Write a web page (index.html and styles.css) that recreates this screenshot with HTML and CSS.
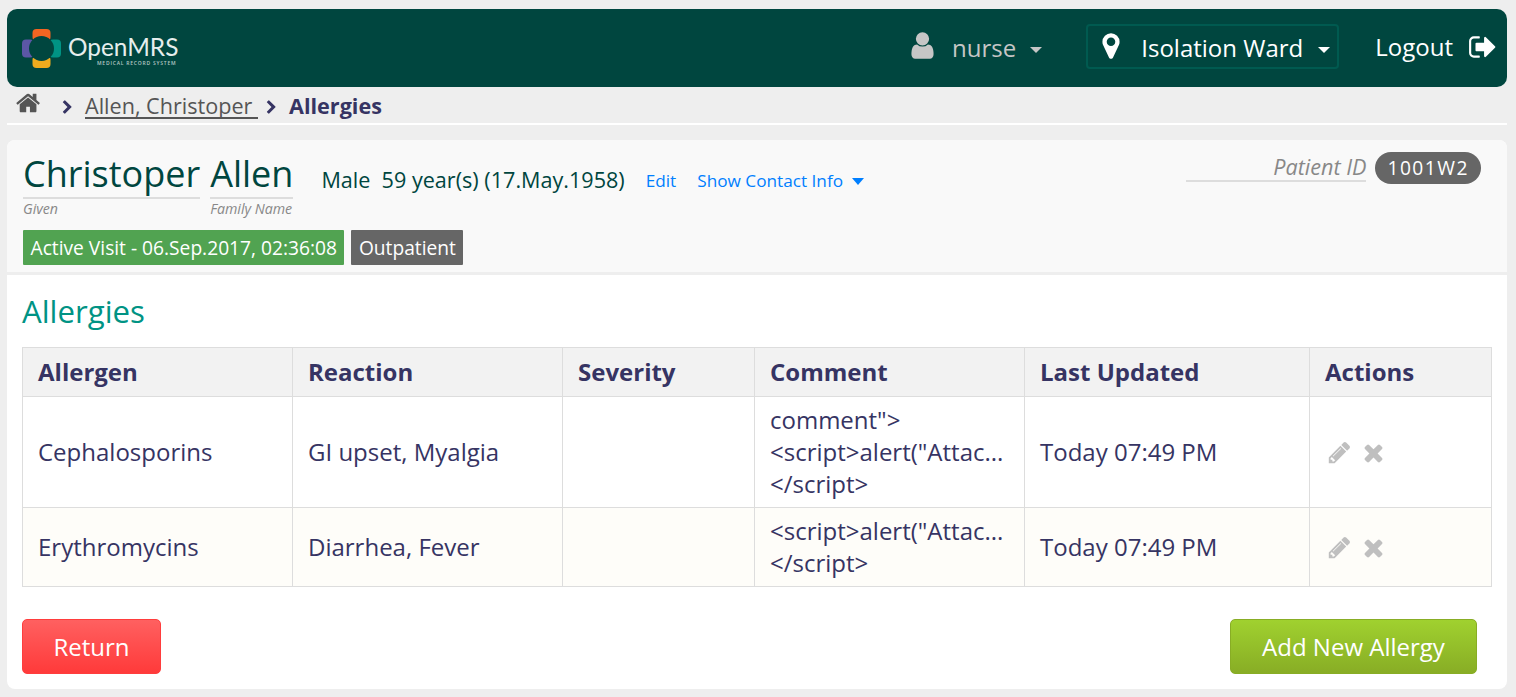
FILE: index.html
```html
<!DOCTYPE html>
<html lang="en">
<head>
  <meta charset="UTF-8" />
  <title>OpenMRS - Allergies</title>
  <link rel="stylesheet" href="styles.css">
</head>
<body>
  <!-- Top bar -->
  <header class="topbar">
    <a class="logo" href="#">
      <svg class="logo-mark" viewBox="0 0 39 39">
        <rect x="10.5" y="0" width="18" height="12" rx="4" fill="#f26522" />
        <rect x="27" y="10.5" width="12" height="18" rx="4" fill="#009384" />
        <rect x="10.5" y="27" width="18" height="12" rx="4" fill="#eeab1e" />
        <rect x="0" y="10.5" width="12" height="18" rx="4" fill="#5b57a6" />
        <circle cx="19.5" cy="19.5" r="12.5" fill="#00463f" />
      </svg>
      <span class="logo-text">
        <span class="logo-name">OpenMRS</span>
        <span class="logo-sub">MEDICAL RECORD SYSTEM</span>
      </span>
    </a>
    <nav class="topnav">
      <a class="user" href="#">
        <svg class="icon icon-user" viewBox="0 0 1792 1792"><path d="M1536 1399q0 109-62.5 187t-150.5 78h-854q-88 0-150.5-78t-62.5-187q0-85 8.5-160.5t31.5-152 58.5-131 94-89 134.5-34.5q131 128 313 128t313-128q76 0 134.5 34.5t94 89 58.5 131 31.5 152 8.5 160.5zm-256-887q0 159-112.5 271.5t-271.5 112.5-271.5-112.5-112.5-271.5 112.5-271.5 271.5-112.5 271.5 112.5 112.5 271.5z"/></svg>
        <span>nurse</span>
        <i class="caret"></i>
      </a>
      <a class="location" href="#">
        <svg class="icon icon-marker" viewBox="0 0 1792 1792"><path d="M1152 640q0-106-75-181t-181-75-181 75-75 181 75 181 181 75 181-75 75-181zm256 0q0 109-33 179l-364 774q-16 33-47.5 52t-67.5 19-67.5-19-46.5-52l-365-774q-33-70-33-179 0-212 150-362t362-150 362 150 150 362z"/></svg>
        <span class="location-name">Isolation Ward</span>
        <i class="caret"></i>
      </a>
      <a class="logout" href="#">
        <span>Logout</span>
        <svg class="icon icon-logout" viewBox="0 0 1792 1792"><path d="M704 1440q0 4 1 20t.5 26.5-3 23.5-10 19.5-20.5 6.5h-320q-119 0-203.5-84.5t-84.5-203.5v-704q0-119 84.5-203.5t203.5-84.5h320q13 0 22.5 9.5t9.5 22.5q0 4 1 20t.5 26.5-3 23.5-10 19.5-20.5 6.5h-320q-66 0-113 47t-47 113v704q0 66 47 113t113 47h312l11.5 1 11.5 3 8 5.5 7 9 2 13.5zm928-544q0 26-19 45l-544 544q-19 19-45 19t-45-19-19-45v-288h-448q-26 0-45-19t-19-45v-384q0-26 19-45t45-19h448v-288q0-26 19-45t45-19 45 19l544 544q19 19 19 45z"/></svg>
      </a>
    </nav>
  </header>

  <!-- Breadcrumbs -->
  <nav class="breadcrumbs">
    <a class="crumb-home" href="#">
      <svg class="icon icon-home" viewBox="0 0 1792 1792"><path d="M1408 992v480q0 26-19 45t-45 19h-384v-384h-256v384h-384q-26 0-45-19t-19-45v-480q0-1 .5-3t.5-3l575-474 575 474q1 2 1 6zm223-69l-62 74q-8 9-21 11h-3q-13 0-21-7l-692-577-692 577q-12 8-24 7-13-2-21-11l-62-74q-8-10-7-23.5t11-21.5l719-599q32-26 76-26t76 26l244 204v-195q0-14 9-23t23-9h192q14 0 23 9t9 23v408l219 182q10 8 11 21.5t-7 23.5z"/></svg>
    </a>
    <svg class="icon icon-chevron chevron-first" viewBox="0 0 1792 1792"><path d="M1363 877l-742 742q-19 19-45 19t-45-19l-166-166q-19-19-19-45t19-45l531-531-531-531q-19-19-19-45t19-45l166-166q19-19 45-19t45 19l742 742q19 19 19 45t-19 45z"/></svg>
    <a class="crumb-link" href="#">Allen, Christoper&nbsp;</a>
    <svg class="icon icon-chevron" viewBox="0 0 1792 1792"><path d="M1363 877l-742 742q-19 19-45 19t-45-19l-166-166q-19-19-19-45t19-45l531-531-531-531q-19-19-19-45t19-45l166-166q19-19 45-19t45 19l742 742q19 19 19 45t-19 45z"/></svg>
    <span class="crumb-current">Allergies</span>
  </nav>

  <main class="card">
    <!-- Patient header -->
    <section class="patient">
      <div class="patient-top">
        <div class="name-part name-given">
          <div class="name-value">Christoper</div>
          <div class="name-label">Given</div>
        </div>
        <div class="name-part name-family">
          <div class="name-value">Allen</div>
          <div class="name-label">Family Name</div>
        </div>
        <div class="demographics">Male&nbsp; 59 year(s) (17.May.1958)</div>
        <a class="patient-link" href="#">Edit</a>
        <a class="patient-link contact-link" href="#">Show Contact Info <i class="caret caret-blue"></i></a>
        <div class="patient-id">
          <span class="id-label">Patient ID</span>
          <span class="id-badge">1001W2</span>
        </div>
      </div>
      <div class="visit-tags">
        <span class="tag tag-green">Active Visit - 06.Sep.2017, 02:36:08</span>
        <span class="tag tag-grey">Outpatient</span>
      </div>
    </section>

    <!-- Allergies list -->
    <section class="allergies">
      <h2>Allergies</h2>
      <table class="allergy-table">
        <colgroup>
          <col class="col-allergen"><col class="col-reaction"><col class="col-severity">
          <col class="col-comment"><col class="col-updated"><col class="col-actions">
        </colgroup>
        <thead>
          <tr>
            <th>Allergen</th><th>Reaction</th><th>Severity</th>
            <th>Comment</th><th>Last Updated</th><th>Actions</th>
          </tr>
        </thead>
        <tbody>
          <tr>
            <td>Cephalosporins</td>
            <td>GI upset, Myalgia</td>
            <td></td>
            <td>
              <div>comment"&gt;</div>
              <div class="no-wrap">&lt;script&gt;alert("Attac...</div>
              <div>&lt;/script&gt;</div>
            </td>
            <td>Today 07:49 PM</td>
            <td>
              <div class="actions">
                <svg class="icon icon-edit" viewBox="0 0 1792 1792"><path d="M491 1536l91-91-235-235-91 91v107h128v128h107zm523-928q0-22-22-22-10 0-17 7l-542 542q-7 7-7 17 0 22 22 22 10 0 17-7l542-542q7-7 7-17zm-54-192l416 416-832 832h-416v-416zm683 96q0 53-37 90l-166 166-416-416 166-165q36-38 90-38 53 0 91 38l235 234q37 39 37 91z"/></svg>
                <svg class="icon icon-delete" viewBox="0 0 1792 1792"><path d="M1490 1322q0 40-28 68l-136 136q-28 28-68 28t-68-28l-294-294-294 294q-28 28-68 28t-68-28l-136-136q-28-28-28-68t28-68l294-294-294-294q-28-28-28-68t28-68l136-136q28-28 68-28t68 28l294 294 294-294q28-28 68-28t68 28l136 136q28 28 28 68t-28 68l-294 294 294 294q28 28 28 68z"/></svg>
              </div>
            </td>
          </tr>
          <tr class="row-even">
            <td>Erythromycins</td>
            <td>Diarrhea, Fever</td>
            <td></td>
            <td>
              <div class="no-wrap">&lt;script&gt;alert("Attac...</div>
              <div>&lt;/script&gt;</div>
            </td>
            <td>Today 07:49 PM</td>
            <td>
              <div class="actions">
                <svg class="icon icon-edit" viewBox="0 0 1792 1792"><path d="M491 1536l91-91-235-235-91 91v107h128v128h107zm523-928q0-22-22-22-10 0-17 7l-542 542q-7 7-7 17 0 22 22 22 10 0 17-7l542-542q7-7 7-17zm-54-192l416 416-832 832h-416v-416zm683 96q0 53-37 90l-166 166-416-416 166-165q36-38 90-38 53 0 91 38l235 234q37 39 37 91z"/></svg>
                <svg class="icon icon-delete" viewBox="0 0 1792 1792"><path d="M1490 1322q0 40-28 68l-136 136q-28 28-68 28t-68-28l-294-294-294 294q-28 28-68 28t-68-28l-136-136q-28-28-28-68t28-68l294-294-294-294q-28-28-28-68t28-68l136-136q28-28 68-28t68 28l294 294 294-294q28-28 68-28t68 28l136 136q28 28 28 68t-28 68l-294 294 294 294q28 28 28 68z"/></svg>
              </div>
            </td>
          </tr>
        </tbody>
      </table>
      <div class="form-actions">
        <button class="btn btn-return">Return</button>
        <button class="btn btn-add">Add New Allergy</button>
      </div>
    </section>
  </main>
</body>
</html>
```

FILE: styles.css
```css
/* Basic resets and layout */
* {
  margin: 0;
  padding: 0;
  box-sizing: border-box;
}
html, body {
  height: 697px;
  overflow: hidden;
}
body {
  font-family: "Open Sans", sans-serif;
  background: #eeeeee;
  color: #363463;
  padding: 9px 9px 8px 7px;
}
a {
  color: inherit;
  text-decoration: none;
}
.icon {
  display: block;
  fill: currentColor;
  flex: none;
}
.caret {
  display: inline-block;
  width: 0;
  height: 0;
  border-left: 6px solid transparent;
  border-right: 6px solid transparent;
  border-top: 6px solid currentColor;
}

/* Top bar */
.topbar {
  display: flex;
  align-items: center;
  justify-content: space-between;
  height: 78px;
  background: #00463f;
  border-radius: 10px;
  padding: 0 9px 0 15px;
  color: #ffffff;
}
.logo {
  display: flex;
  align-items: center;
  gap: 7px;
}
.logo-mark {
  display: block;
  width: 39px;
  height: 39px;
}
.logo-text {
  display: flex;
  flex-direction: column;
  align-items: flex-end;
  margin-top: 3px;
}
.logo-name {
  font-family: "Lato", sans-serif;
  font-size: 24.4px;
  line-height: 25px;
  color: #e6eeed;
}
.logo-sub {
  font-size: 5px;
  line-height: 6px;
  letter-spacing: 0.78px;
  font-weight: 600;
  margin-top: 1px;
  margin-right: 2px;
  color: #b5c8c5;
}
.topnav {
  display: flex;
  align-items: center;
  font-size: 24px;
}
.user {
  display: flex;
  align-items: center;
  color: #c6c6c6;
  margin-right: 44px;
  margin-bottom: 2px;
}
.icon-user {
  width: 31px;
  height: 31px;
  margin-right: 14px;
  margin-top: -3px;
  margin-left: -3px;
}
.user .caret {
  margin-left: 14px;
  margin-top: 6px;
}
.location {
  display: flex;
  align-items: center;
  height: 45px;
  width: 253px;
  padding: 2px 8px 0 0;
  border: 2px solid #005a50;
  border-radius: 4px;
  margin-right: 36px;
  margin-bottom: 3px;
}
.icon-marker {
  width: 30px;
  height: 30px;
  margin: -4px 0 0 8px;
}
.location-name {
  white-space: nowrap;
  margin-left: 15px;
}
.location .caret {
  margin-left: 15px;
  margin-top: 4px;
}
.logout {
  display: flex;
  align-items: center;
  gap: 15px;
  margin-bottom: 3px;
}
.icon-logout {
  width: 30px;
  height: 30px;
}

/* Breadcrumbs */
.breadcrumbs {
  display: flex;
  align-items: center;
  height: 38px;
  border-bottom: 2px solid #ffffff;
  padding: 2px 0 0 9px;
  font-size: 21.6px;
  color: #363463;
}
.crumb-home {
  color: #555555;
}
.icon-home {
  width: 26px;
  height: 26px;
  margin-top: -6px;
}
.icon-chevron {
  width: 15px;
  height: 15px;
  margin: 2px 5px 0 6px;
}
.chevron-first {
  margin-left: 18px;
  margin-right: 10px;
}
.crumb-link {
  color: #555555;
  border-bottom: 2px solid #555555;
  line-height: 22px;
  margin-top: 2px;
}
.crumb-current {
  font-weight: 700;
  margin-left: 5px;
  margin-bottom: 2px;
}

/* Main card */
.card {
  margin-top: 15px;
  height: 549px;
  background: #ffffff;
  border-radius: 8px;
  overflow: hidden;
}
.patient {
  height: 135px;
  background: #f9f9f9;
  border-bottom: 3px solid #eeeeee;
  padding: 0 16px;
  color: #00463f;
}
.patient-top {
  display: flex;
  align-items: flex-start;
  height: 90px;
}
.name-part {
  margin-top: 10px;
  margin-right: 10px;
}
.name-value {
  font-size: 36px;
  line-height: 47px;
  border-bottom: 2px solid #dddddd;
}
.name-label {
  font-size: 14.2px;
  line-height: 20px;
  font-style: italic;
  color: #888888;
}
.demographics {
  font-size: 21.6px;
  line-height: 27px;
  margin: 26px 0 0 18px;
}
.patient-link {
  font-size: 17.2px;
  line-height: 22px;
  margin: 30px 0 0 21px;
  color: #007fff;
}
.caret-blue {
  border-width: 7px 6px 0;
  border-left-color: transparent;
  border-right-color: transparent;
  margin-left: 4px;
  vertical-align: 2px;
}
.patient-id {
  display: flex;
  align-items: flex-start;
  margin: 12px 10px 0 auto;
}
.id-label {
  width: 180px;
  height: 30px;
  line-height: 30px;
  font-size: 21.6px;
  font-style: italic;
  color: #888888;
  text-align: right;
  border-bottom: 2px solid #dddddd;
}
.id-badge {
  height: 32px;
  line-height: 32px;
  padding: 0 12px;
  margin-left: 9px;
  background: #666666;
  color: #ffffff;
  font-size: 19.2px;
  letter-spacing: 1.5px;
  border-radius: 16px;
}
.visit-tags {
  display: flex;
  gap: 7px;
}
.tag {
  height: 35px;
  line-height: 35px;
  padding: 0 7.5px;
  font-size: 19.2px;
  color: #ffffff;
  border-radius: 1px;
}
.tag-green {
  background: #51a351;
}
.tag-grey {
  background: #666666;
}

/* Allergies section */
.allergies {
  padding: 0 15px;
}
.allergies h2 {
  font-size: 31.2px;
  font-weight: 400;
  line-height: 38px;
  color: #009384;
  margin-top: 17px;
  margin-bottom: 17px;
}
.allergy-table {
  width: 1470px;
  table-layout: fixed;
  border-collapse: collapse;
  font-size: 24px;
  line-height: 32px;
}
.col-allergen, .col-reaction, .col-comment { width: 270px; }
.col-severity { width: 192px; }
.col-updated { width: 285px; }
.allergy-table th, .allergy-table td {
  border: 1px solid #dddddd;
  padding: 0 15px;
  text-align: left;
}
.allergy-table th {
  height: 49px;
  background: #f2f2f2;
  font-weight: 700;
}
.allergy-table td {
  height: 79px;
  padding-top: 7px;
  padding-bottom: 7px;
}
.row-even td {
  background: #fefdf9;
}
.no-wrap {
  white-space: nowrap;
}
.actions {
  display: flex;
  align-items: center;
  gap: 8px;
  color: #bfbfbf;
}
.icon-edit {
  width: 25px;
  height: 25px;
  margin-left: 2px;
}
.icon-delete {
  width: 27px;
  height: 27px;
}
.form-actions {
  display: flex;
  justify-content: space-between;
  padding-right: 15px;
  margin-top: 32px;
}
.btn {
  height: 55px;
  font-family: inherit;
  font-size: 24px;
  color: #ffffff;
  border-radius: 5px;
  cursor: pointer;
}
.btn-return {
  width: 139px;
  border: 1px solid #ff3d3d;
  background: linear-gradient(#ff6060, #ff3a3a);
}
.btn-add {
  width: 247px;
  border: 1px solid #88ad25;
  background: linear-gradient(#a0d12f, #88ad25);
}
```
